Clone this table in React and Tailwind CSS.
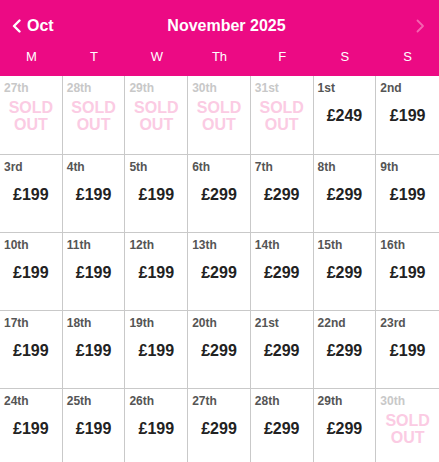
import React from "react";

const weeks = [
  [
    { d: "27th", s: true, past: true },
    { d: "28th", s: true, past: true },
    { d: "29th", s: true, past: true },
    { d: "30th", s: true, past: true },
    { d: "31st", s: true, past: true },
    { d: "1st", p: "£249" },
    { d: "2nd", p: "£199" },
  ],
  [
    { d: "3rd", p: "£199" },
    { d: "4th", p: "£199" },
    { d: "5th", p: "£199" },
    { d: "6th", p: "£299" },
    { d: "7th", p: "£299" },
    { d: "8th", p: "£299" },
    { d: "9th", p: "£199" },
  ],
  [
    { d: "10th", p: "£199" },
    { d: "11th", p: "£199" },
    { d: "12th", p: "£199" },
    { d: "13th", p: "£299" },
    { d: "14th", p: "£299" },
    { d: "15th", p: "£299" },
    { d: "16th", p: "£199" },
  ],
  [
    { d: "17th", p: "£199" },
    { d: "18th", p: "£199" },
    { d: "19th", p: "£199" },
    { d: "20th", p: "£299" },
    { d: "21st", p: "£299" },
    { d: "22nd", p: "£299" },
    { d: "23rd", p: "£199" },
  ],
  [
    { d: "24th", p: "£199" },
    { d: "25th", p: "£199" },
    { d: "26th", p: "£199" },
    { d: "27th", p: "£299" },
    { d: "28th", p: "£299" },
    { d: "29th", p: "£299" },
    { d: "30th", s: true, past: true },
  ],
];

const days = ["M", "T", "W", "Th", "F", "S", "S"];

function Cell({ c, last, first }) {
  return (
    <div
      className={`h-[78px] flex flex-col border-[#c9c9c9] ${first ? "" : "border-t"} ${
        last ? "" : "border-r"
      } px-[4px] pt-[4px]`}
    >
      <div
        className={`text-[12px] font-bold leading-[16px] ${
          c.past ? "text-[#c8c8c8]" : "text-[#555555]"
        }`}
      >
        {c.d}
      </div>
      {c.s ? (
        <div className="mt-[3px] text-center text-[16px] font-bold leading-[17px] text-[#fbcbe3]">
          SOLD
          <br />
          OUT
        </div>
      ) : (
        <div className="mt-[10px] text-center text-[16px] font-bold leading-[20px] text-[#222222]">
          {c.p}
        </div>
      )}
    </div>
  );
}

export default function App() {
  return (
    <div
      className="w-[439px] h-[462px] overflow-hidden bg-white"
      style={{ fontFamily: '"Liberation Sans", Arial, sans-serif' }}
    >
      <div className="bg-[#ec0a84] h-[76px] text-white">
        <div className="flex items-center h-[48px] pt-[3px]">
          <div className="w-[70px] flex items-center pl-[12px] gap-[6px]">
            <svg width="9" height="14" viewBox="0 0 9 14" fill="none">
              <path d="M7.5 1.5 L2 7 L7.5 12.5" stroke="white" strokeWidth="2.4" strokeLinecap="round" strokeLinejoin="round" />
            </svg>
            <span className="text-[16px] font-bold">Oct</span>
          </div>
          <div className="flex-1 text-center text-[16px] font-bold">November 2025</div>
          <div className="w-[56px] flex justify-end pr-[14px]">
            <svg width="9" height="14" viewBox="0 0 9 14" fill="none">
              <path d="M1.5 1.5 L7 7 L1.5 12.5" stroke="#f463b0" strokeWidth="1.8" strokeLinecap="round" strokeLinejoin="round" />
            </svg>
          </div>
        </div>
        <div className="grid grid-cols-7 h-[28px] items-start pt-[1px]">
          {days.map((d, i) => (
            <div key={i} className="text-center text-[13px] leading-[16px]">
              {d}
            </div>
          ))}
        </div>
      </div>
      <div className="grid grid-cols-7">
        {weeks.map((w, wi) =>
          w.map((c, ci) => (
            <Cell key={`${wi}-${ci}`} c={c} last={ci === 6} first={wi === 0} />
          ))
        )}
      </div>
    </div>
  );
}
